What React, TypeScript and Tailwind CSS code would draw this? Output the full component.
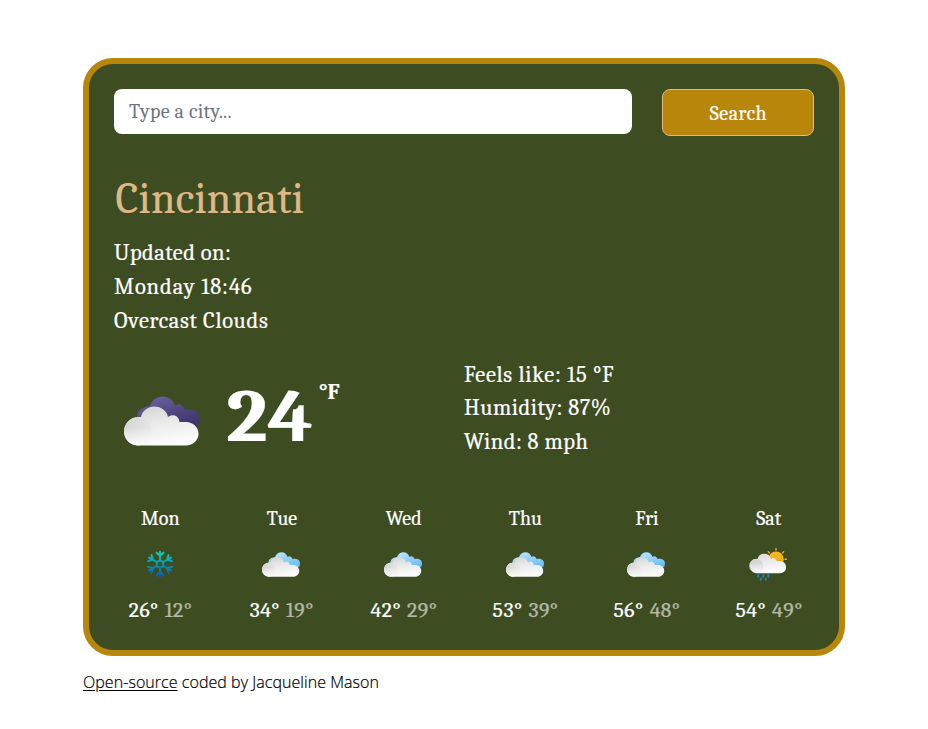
import React from "react";

const SERIF = "font-[Cambria,Caladea,'Noto_Serif','DejaVu_Serif_Condensed','DejaVu_Serif',serif]";

function Clouds({ className, id, from, to }: { className: string; id: string; from: string; to: string }) {
  return (
    <svg className={className} viewBox="0 0 76 50">
      <defs>
        <linearGradient id={id + "b"} x1="0" y1="0" x2="0.6" y2="1">
          <stop offset="0" stopColor={from} />
          <stop offset="1" stopColor={to} />
        </linearGradient>
        <linearGradient id={id + "f"} x1="0" y1="0" x2="0.3" y2="1">
          <stop offset="0" stopColor="#d2d2d2" />
          <stop offset="0.6" stopColor="#ededed" />
          <stop offset="1" stopColor="#fbfbfb" />
        </linearGradient>
        <linearGradient id={id + "l"} x1="0" y1="0" x2="1" y2="0.4">
          <stop offset="0" stopColor="#d2d2d2" />
          <stop offset="1" stopColor="#e8e8e8" />
        </linearGradient>
        <linearGradient id={id + "m"} x1="0" y1="0" x2="0" y2="1">
          <stop offset="0.35" stopColor="#fbfbfb" stopOpacity="0" />
          <stop offset="1" stopColor="#fbfbfb" />
        </linearGradient>
      </defs>
      <path d="M13 30V20Q13 12 26 10C28 4 33 .5 39 .5C45 .5 49 4 51 10C54 7 59 8 61 14C71 12 76 17 76 23C76 28 74 31 70 31Z" fill={"url(#" + id + "b)"} />
      <path d="M14 49.500C6 49.500 0 43 0 35.500C0 27 7 21 14 21H17C18 15 24 10.500 30.500 10.500C37 10.500 43 15 44 21C49 17 55 20 55.500 26H62C69 26 74.500 31 74.500 38C74.500 44 69 49.500 62 49.500Z" fill={"url(#" + id + "f)"} />
      <circle cx="14" cy="35.300" r="13.900" fill={"url(#" + id + "l)"} />
      <circle cx="14" cy="35.300" r="13.900" fill={"url(#" + id + "m)"} />
    </svg>
  );
}

function Snowflake() {
  return (
    <svg className="mb-[2px] h-[30px] w-[30px]" viewBox="-14 -14 28 28" fill="none" stroke="url(#snow)" strokeWidth="1.900" strokeLinecap="round">
      <defs>
        <linearGradient id="snow" gradientUnits="userSpaceOnUse" x1="0" y1="-11" x2="0" y2="11">
          <stop offset="0" stopColor="#08d0b8" />
          <stop offset="1" stopColor="#0560b0" />
        </linearGradient>
      </defs>
      <path d="M0 -3.400L2.900 -1.700V1.700L0 3.400L-2.900 1.700V-1.700ZM0 -3.400V-11.500M-3.200 -10.600L0 -7.600L3.200 -10.600M0 3.400V11.500M-3.200 10.600L0 7.600L3.200 10.600M2.900 -1.700L10.200 -5.900M7.900 -8.300L6.700 -3.900L11.100 -2.700M2.900 1.700L10.200 5.900M7.900 8.300L6.700 3.900L11.100 2.700M-2.900 -1.700L-10.200 -5.900M-7.900 -8.300L-6.700 -3.900L-11.100 -2.700M-2.900 1.700L-10.200 5.900M-7.900 8.300L-6.700 3.900L-11.100 2.700" />
    </svg>
  );
}

function SunRain() {
  return (
    <svg className="h-[34px] w-[38px]" viewBox="0 0 38 34">
      <defs>
        <linearGradient id="sun" x1="0" y1="0" x2="0.5" y2="1">
          <stop offset="0" stopColor="#f8bd25" />
          <stop offset="1" stopColor="#eda817" />
        </linearGradient>
        <linearGradient id="rainCloud" x1="0" y1="0" x2="0.4" y2="1">
          <stop offset="0" stopColor="#dadada" />
          <stop offset="0.600" stopColor="#eeeeee" />
          <stop offset="1" stopColor="#fcfcfc" />
        </linearGradient>
        <linearGradient id="rainPuff" x1="0" y1="0" x2="0" y2="1">
          <stop offset="0.300" stopColor="#d6d6d6" />
          <stop offset="1" stopColor="#f2f2f2" stopOpacity="0" />
        </linearGradient>
      </defs>
      <path d="M27 .6V2M19.300 3.800L20.400 4.900M34.600 3.800L33.500 4.900M36 11.300H37.500M33.800 18L34.800 19" stroke="#f0ad18" strokeWidth="1.400" strokeLinecap="round" />
      <circle cx="27" cy="11.300" r="7.800" fill="url(#sun)" />
      <path d="M7 25.300A7.300 7.300 0 0 1 7 10.900H8.500A7 7 0 0 1 22 10.900C24 9 27 10.300 27.500 13H31A6 6 0 0 1 31 25.300Z" fill="url(#rainCloud)" />
      <circle cx="7.200" cy="18" r="7.200" fill="url(#rainPuff)" />
      <path d="M9.300 26.800V28.800M14.300 26.800V28.800M19.300 26.800V28.800M11.800 30.600V31.800M16.800 30.600V31.800" stroke="#247eb5" strokeWidth="2" strokeLinecap="round" />
    </svg>
  );
}

const days = [
  { day: "Mon", hi: "26°", lo: "12°" },
  { day: "Tue", hi: "34°", lo: "19°" },
  { day: "Wed", hi: "42°", lo: "29°" },
  { day: "Thu", hi: "53°", lo: "39°" },
  { day: "Fri", hi: "56°", lo: "48°" },
  { day: "Sat", hi: "54°", lo: "49°" },
];

export default function App() {
  return (
    <div className="min-h-[729px] bg-white pt-[58px]">
      <main className={"mx-auto h-[598px] w-[762px] rounded-[30px] border-[6px] border-[#b8860b] bg-[#3e4c22] p-[25px] text-white [-webkit-text-stroke:0.2px] " + SERIF}>
        <form className="flex h-[47px] items-start gap-[30px]" onSubmit={(e) => e.preventDefault()}>
          <input
            className="h-[45px] w-[518px] rounded-lg bg-white px-[15px] text-[20px] tracking-[0.320px] text-black [-webkit-text-stroke:0px] placeholder:text-[#6c757d] placeholder:opacity-100"
            placeholder="Type a city..."
          />
          <button className="h-[47px] w-[152px] rounded-lg border border-[#deb887] bg-[#b8860b] pt-[2px] pl-px text-[20px] tracking-[0.500px]">Search</button>
        </form>
        <h1 className="mt-[36px] ml-[1.500px] h-[54px] text-[44px] leading-[54px] tracking-[0.200px] text-[#deb887]">Cincinnati</h1>
        <ul className="mt-[10px] text-[22.500px] leading-[34px]">
          <li className="tracking-[0.450px]">Updated on:</li>
          <li className="tracking-[0.900px]">Monday 18:46</li>
          <li className="tracking-[0.650px]">Overcast Clouds</li>
        </ul>
        <section className="mt-[20px] flex h-[101px]">
          <div className="flex w-[350px]">
            <Clouds className="mt-[38px] ml-[10px] h-[50px] w-[76px] shrink-0" id="main" from="#6d65a8" to="#40366b" />
            <strong className="mt-[3px] ml-[26px] w-[93px] origin-left scale-x-[1.100] text-[75px] leading-[112px]">24</strong>
            <span className="mt-[17px] text-[22.500px] leading-[34px] font-bold">°F</span>
          </div>
          <ul className="pt-[0.600px] text-[22.500px] leading-[33.600px]">
            <li className="tracking-[0.700px]">Feels like: 15 °F</li>
            <li className="tracking-[0.500px]">Humidity: 87%</li>
            <li className="tracking-[0.500px]">Wind: 8 mph</li>
          </ul>
        </section>
        <section className="-mx-[15px] mt-[45px] grid grid-cols-6 text-center text-[20px] leading-[30px]">
          {days.map((d, i) => (
            <div key={d.day} className="flex flex-col items-center">
              <div className="pl-px">{d.day}</div>
              <div className="mt-[10px] flex h-[42px] items-center justify-center">
                {i === 0 ? <Snowflake /> : i === 5 ? <SunRain /> : <Clouds className="mb-[2px] h-[25px] w-[38px]" id={"c" + i} from="#c6e8fd" to="#6cc0f4" />}
              </div>
              <div className="mt-[10px] flex scale-x-[1.080] gap-[5.500px] pl-px tracking-[0.500px]">
                <span>{d.hi}</span>
                <span className="opacity-60">{d.lo}</span>
              </div>
            </div>
          ))}
        </section>
      </main>
      <footer className="mx-auto mt-[14px] w-[762px] font-['Segoe_UI','Open_Sans','Noto_Sans',sans-serif] text-[16px] leading-[24px] font-[350] tracking-[0.050px] text-black [-webkit-text-stroke:0.2px]">
        <a className="underline underline-offset-2" href="#">Open-source</a> coded by Jacqueline Mason
      </footer>
    </div>
  );
}
